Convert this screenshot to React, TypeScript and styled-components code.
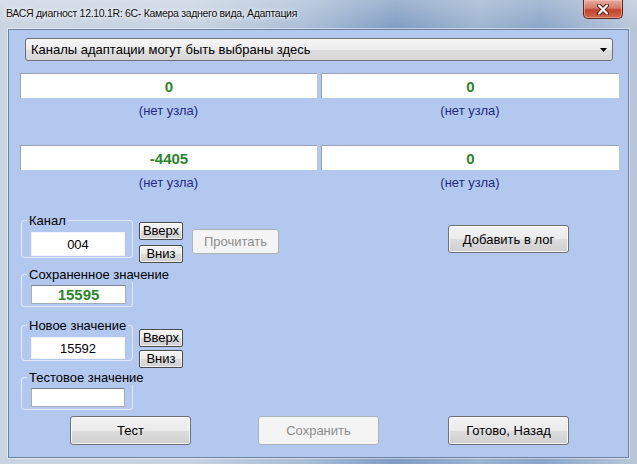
import React from "react";
import styled, { createGlobalStyle } from "styled-components";

const GlobalStyle = createGlobalStyle`
  html, body {
    margin: 0;
    padding: 0;
  }

  body {
    font-family: "Liberation Sans", Arial, sans-serif;
    font-size: 13px;
    color: #000;
  }
`;

type ValueProps = { value: string };

const ValueCell: React.FC<ValueProps> = ({ value }) => (
  <Cell>
    <ValueBox>{value}</ValueBox>
    <NodeLabel>(нет узла)</NodeLabel>
  </Cell>
);

const SpinButtons: React.FC<{ gap: number; top: number }> = ({ gap, top }) => (
  <SpinColumn gap={gap} top={top}>
    <SmallButton>Вверх</SmallButton>
    <SmallButton>Вниз</SmallButton>
  </SpinColumn>
);

const App: React.FC = () => {
  return (
    <>
      <GlobalStyle />
      <Window>
        <TitleBar>
          <Title>ВАСЯ диагност 12.10.1R: 6C- Камера заднего вида, Адаптация</Title>
          <CloseButton aria-label="close">
            <svg width="14" height="11" viewBox="0 0 14 11">
              <path
                d="M3 1.5 L11 9.5 M11 1.5 L3 9.5"
                stroke="#5b1f16"
                strokeWidth="4"
                strokeLinecap="round"
              />
              <path
                d="M3 1.5 L11 9.5 M11 1.5 L3 9.5"
                stroke="#ffffff"
                strokeWidth="2.2"
                strokeLinecap="round"
              />
            </svg>
          </CloseButton>
        </TitleBar>

        <Client>
          <Combo>
            <span>Каналы адаптации могут быть выбраны здесь</span>
            <svg width="7" height="4" viewBox="0 0 7 4">
              <path d="M0 0 H7 L3.5 4 Z" fill="#000" />
            </svg>
          </Combo>

          <ValueRow top={12}>
            <ValueCell value="0" />
            <ValueCell value="0" />
          </ValueRow>
          <ValueRow top={27}>
            <ValueCell value="-4405" />
            <ValueCell value="0" />
          </ValueRow>

          <ControlRow top={23}>
            <Group pt={4} pb={1}>
              <Legend>Канал</Legend>
              <Field readOnly value="004" h={24} />
            </Group>
            <SpinButtons gap={5} top={9} />
            <Button disabled w={87} h={25} ml={9} mt={16}>
              Прочитать
            </Button>
            <Button w={121} h={28} ml={169} mt={12}>
              Добавить в лог
            </Button>
          </ControlRow>

          <ControlRow top={4}>
            <Group pt={3} pb={2}>
              <Legend>Сохраненное значение</Legend>
              <SavedField>15595</SavedField>
            </Group>
          </ControlRow>

          <ControlRow top={11}>
            <Group pt={4} pb={1}>
              <Legend>Новое значение</Legend>
              <Field readOnly value="15592" h={22} />
            </Group>
            <SpinButtons gap={3} top={11} />
          </ControlRow>

          <ControlRow top={2}>
            <Group pt={3} pb={2}>
              <Legend>Тестовое значение</Legend>
              <Field readOnly value="" h={19} bordered />
            </Group>
          </ControlRow>

          <ControlRow top={6}>
            <Button w={121} h={29} ml={61}>
              Тест
            </Button>
            <Button disabled w={121} h={29} ml={67}>
              Сохранить
            </Button>
            <Button w={121} h={29} ml={69}>
              Готово, Назад
            </Button>
          </ControlRow>
        </Client>
      </Window>
    </>
  );
};

const Window = styled.div`
  width: 637px;
  height: 464px;
  box-sizing: border-box;
  display: flex;
  flex-direction: column;
  overflow: hidden;

  background:
    linear-gradient(180deg, rgba(255, 255, 255, 0.25) 0px, rgba(255, 255, 255, 0) 30px),
    linear-gradient(
      90deg,
      #c9d4e1 0%,
      #c6d2e1 30%,
      #a9bdd6 48%,
      #7f9cc2 62%,
      #9db3cf 75%,
      #8aa5c8 85%,
      #b9c7d9 100%
    );
`;

const TitleBar = styled.div`
  height: 29px;
  flex-shrink: 0;
  display: flex;
  align-items: flex-start;
`;

const Title = styled.div`
  margin: 6px 0 0 6px;
  font-family: "Liberation Sans", Arial, sans-serif;
  font-size: 10.5px;
  letter-spacing: -0.3px;
  line-height: 15px;
  color: #101010;
  white-space: nowrap;
  text-shadow: 0 0 6px rgba(255, 255, 255, 0.95), 0 0 3px rgba(255, 255, 255, 0.9);
`;

const CloseButton = styled.div`
  margin-left: auto;
  margin-right: 14px;
  width: 40px;
  height: 19px;
  box-sizing: border-box;
  display: flex;
  align-items: center;
  justify-content: center;

  border: 1px solid #5e2a22;
  border-top: none;
  border-radius: 0 0 5px 5px;
  background: linear-gradient(180deg, #e6ada1 0%, #d57a67 45%, #c1432c 55%, #cf6a4d 100%);
  box-shadow: inset 0 0 0 1px rgba(255, 200, 190, 0.5);
`;

const Client = styled.div`
  flex: 1;
  margin: 0 8px 6px 8px;
  display: flex;
  flex-direction: column;

  border: 1px solid #6f819e;
  background: #b3c8ef;
  box-shadow: 0 0 0 1px rgba(255, 255, 255, 0.45);
`;

const Combo = styled.div`
  margin: 8px 0 0 16px;
  width: 588px;
  height: 23px;
  box-sizing: border-box;
  display: flex;
  align-items: center;
  justify-content: space-between;
  padding: 0 5px 0 5px;

  border: 1px solid #707070;
  border-radius: 3px;
  background: linear-gradient(180deg, #f6f6f6 0%, #ececec 50%, #dfdfdf 51%, #d6d6d6 100%);
  font-size: 13px;
`;

const ValueRow = styled.div<{ top: number }>`
  margin-top: ${(p) => p.top}px;
  padding-left: 11px;
  display: grid;
  grid-template-columns: 297px 298px;
  column-gap: 4px;
`;

const Cell = styled.div`
  display: flex;
  flex-direction: column;
  align-items: stretch;
`;

const ValueBox = styled.div`
  height: 25px;
  box-sizing: border-box;
  display: flex;
  align-items: center;
  justify-content: center;

  background: #fff;
  border-top: 1px solid #9da3ad;
  border-left: 1px solid #9da3ad;

  color: #2b862b;
  font-weight: bold;
  font-size: 15px;
`;

const NodeLabel = styled.div`
  margin-top: 5px;
  line-height: 15px;
  text-align: center;
  color: #1e2a82;
  font-size: 13px;
`;

const ControlRow = styled.div<{ top: number }>`
  margin-top: ${(p) => p.top}px;
  display: flex;
  align-items: flex-start;
`;

const Group = styled.fieldset<{ pt: number; pb: number }>`
  margin: 0 0 0 12px;
  width: 112px;
  box-sizing: border-box;
  padding: ${(p) => p.pt}px 7px ${(p) => p.pb}px 9px;
  border: 1px solid rgba(255, 255, 255, 0.6);
  border-radius: 3px;
  min-inline-size: 0;
`;

const Legend = styled.legend`
  margin-left: -4px;
  padding: 0 2px;
  font-size: 13px;
  line-height: 15px;
  white-space: nowrap;
`;

const Field = styled.input<{ h: number; bordered?: boolean }>`
  display: block;
  width: 94px;
  height: ${(p) => p.h}px;
  box-sizing: border-box;
  margin: 0;
  padding: 0;
  text-align: center;
  font-family: "Liberation Sans", Arial, sans-serif;
  font-size: 13px;
  color: #000;
  background: #fff;
  outline: none;
  border: ${(p) => (p.bordered ? "1px solid #a6acb5" : "1px solid #f2f5fb")};
  ${(p) => p.bordered && "border-top-color: #7d838c;"}
`;

const SavedField = styled.div`
  width: 95px;
  height: 19px;
  box-sizing: border-box;
  display: flex;
  align-items: center;
  justify-content: center;

  background: #fff;
  border: 1px solid #a6acb5;
  border-top-color: #7d838c;

  color: #2b862b;
  font-weight: bold;
  font-size: 15px;
`;

const SpinColumn = styled.div<{ gap: number; top: number }>`
  margin: ${(p) => p.top}px 0 0 6px;
  display: flex;
  flex-direction: column;
  gap: ${(p) => p.gap}px;
`;

const SmallButton = styled.button`
  width: 44px;
  height: 18px;
  box-sizing: border-box;
  padding: 0;
  font-family: "Liberation Sans", Arial, sans-serif;
  font-size: 13px;
  line-height: 14px;
  color: #000;

  border: 1px solid #4a4a4a;
  border-radius: 2px;
  background: linear-gradient(180deg, #f4f4f4 0%, #ebebeb 50%, #dcdcdc 51%, #cfcfcf 100%);
  box-shadow: inset 0 0 0 1px rgba(255, 255, 255, 0.7);
`;

const Button = styled.button<{ w: number; h: number; ml?: number; mt?: number }>`
  width: ${(p) => p.w}px;
  height: ${(p) => p.h}px;
  margin: ${(p) => p.mt ?? 0}px 0 0 ${(p) => p.ml ?? 0}px;
  box-sizing: border-box;
  padding: 0;
  font-family: "Liberation Sans", Arial, sans-serif;
  font-size: 13px;
  color: #000;

  border: 1px solid #707070;
  border-radius: 3px;
  background: linear-gradient(180deg, #f2f2f2 0%, #ebebeb 50%, #dddddd 51%, #cfcfcf 100%);
  box-shadow: inset 0 0 0 1px rgba(255, 255, 255, 0.75);

  &:disabled {
    color: #8c8c8c;
    border-color: #adb2b5;
    background: #f4f4f4;
    box-shadow: none;
  }
`;

export default App;
